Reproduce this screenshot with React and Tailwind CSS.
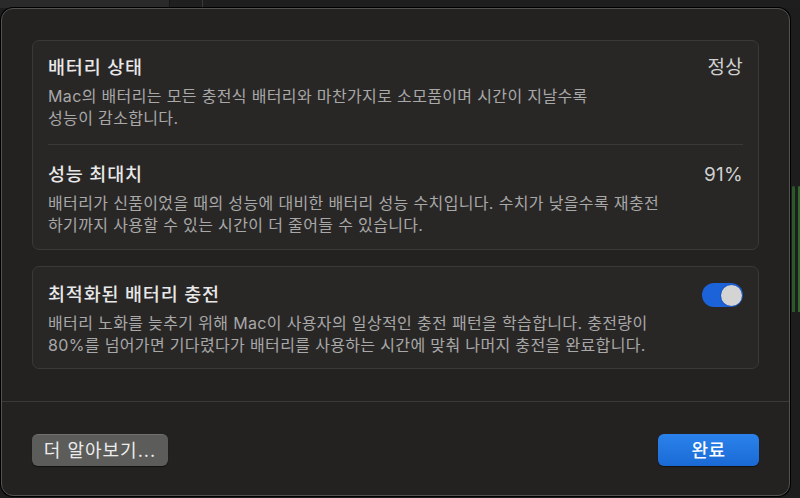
import React from 'react';

const font = { fontFamily: 'Inter, "Noto Sans CJK KR", sans-serif' };

const Toggle = ({ on }) => (
  <div className={`w-[41px] h-[24px] rounded-full p-[1.5px] flex ${on ? 'bg-[#1c63da] justify-end' : 'bg-[#444] justify-start'}`}>
    <div className="w-[21px] h-[21px] rounded-full bg-[#d4d4d4] shadow-[0_0_2px_rgba(0,0,0,0.4)]" />
  </div>
);

const Row = ({ title, value, children, right }) => (
  <div>
    <div className="flex items-center justify-between h-6">
      <span className="text-[18.5px] tracking-[0.8px] font-medium text-[#e8e8e8] whitespace-nowrap">{title}</span>
      {value && <span className="text-[19px] tracking-[0.3px] text-[#d0d0d0] whitespace-nowrap">{value}</span>}
      {right}
    </div>
    <p className="mt-[5px] text-[16px] tracking-[0.35px] leading-[22px] text-[#a8a8a8] whitespace-nowrap">{children}</p>
  </div>
);

export default function App() {
  return (
    <div className="relative w-[800px] h-[498px] overflow-hidden bg-[#1d1d1d]" style={font}>
      {/* window behind the sheet */}
      <div className="flex h-[8px]">
        <div className="w-[170px] bg-[#2a2a2a] border-r border-[#161616]" />
        <div className="w-[33px] bg-[#1f1f1f] border-r border-[#3a3a3a]" />
        <div className="flex-1 bg-[#1e1e1e]" />
      </div>
      <div className="flex justify-end">
        <div className="w-[10px] h-[490px] pt-[178px] flex gap-[3px] pl-[2px]">
          <div className="w-[3px] h-[126px] bg-[#2b5a2a] rounded-t-sm" />
          <div className="w-[3px] h-[126px] bg-[#2f6a2c] rounded-t-sm" />
        </div>
      </div>

      {/* sheet */}
      <div className="absolute left-[1px] top-[8px] w-[789px] h-[488px] rounded-[12px] border border-[#525252] bg-[#232221] shadow-[0_0_0_1px_#000] flex flex-col">
        <div className="px-[30px] pt-[31px] flex flex-col gap-4">
          <div className="rounded-[7px] border border-[#3a3938] bg-[#282726] px-[15px] pt-[15px] pb-[13px]">
            <Row title="배터리 상태" value="정상">
              Mac의 배터리는 모든 충전식 배터리와 마찬가지로 소모품이며 시간이 지날수록<br />
              성능이 감소합니다.
            </Row>
            <div className="mt-[15px] mb-[18px] h-px bg-[#3a3938]" />
            <Row title="성능 최대치" value="91%">
              배터리가 신품이었을 때의 성능에 대비한 배터리 성능 수치입니다. 수치가 낮을수록 재충전<br />
              하기까지 사용할 수 있는 시간이 더 줄어들 수 있습니다.
            </Row>
          </div>

          <div className="rounded-[7px] border border-[#3a3938] bg-[#282726] px-[15px] pt-4 pb-[12px]">
            <Row title="최적화된 배터리 충전" right={<Toggle on />}>
              배터리 노화를 늦추기 위해 Mac이 사용자의 일상적인 충전 패턴을 학습합니다. 충전량이<br />
              80%를 넘어가면 기다렸다가 배터리를 사용하는 시간에 맞춰 나머지 충전을 완료합니다.
            </Row>
          </div>
        </div>

        <div className="mt-[32px] h-px bg-[#3a3938]" />

        <div className="flex justify-between items-start px-[30px] pt-[32px]">
          <button className="h-[32px] w-[136px] rounded-[6px] bg-[#5c5c5b] border-t border-[#707070] text-[18px] tracking-[1px] text-[#ececec] shadow-[0_1px_1px_rgba(0,0,0,0.5)]">
            더 알아보기...
          </button>
          <button className="h-[32px] w-[101px] rounded-[6px] bg-gradient-to-b from-[#2b82ec] to-[#1a6ad4] text-[18px] tracking-[0.5px] font-medium text-white shadow-[0_1px_1px_rgba(0,0,0,0.5)]">
            완료
          </button>
        </div>
      </div>
    </div>
  );
}
